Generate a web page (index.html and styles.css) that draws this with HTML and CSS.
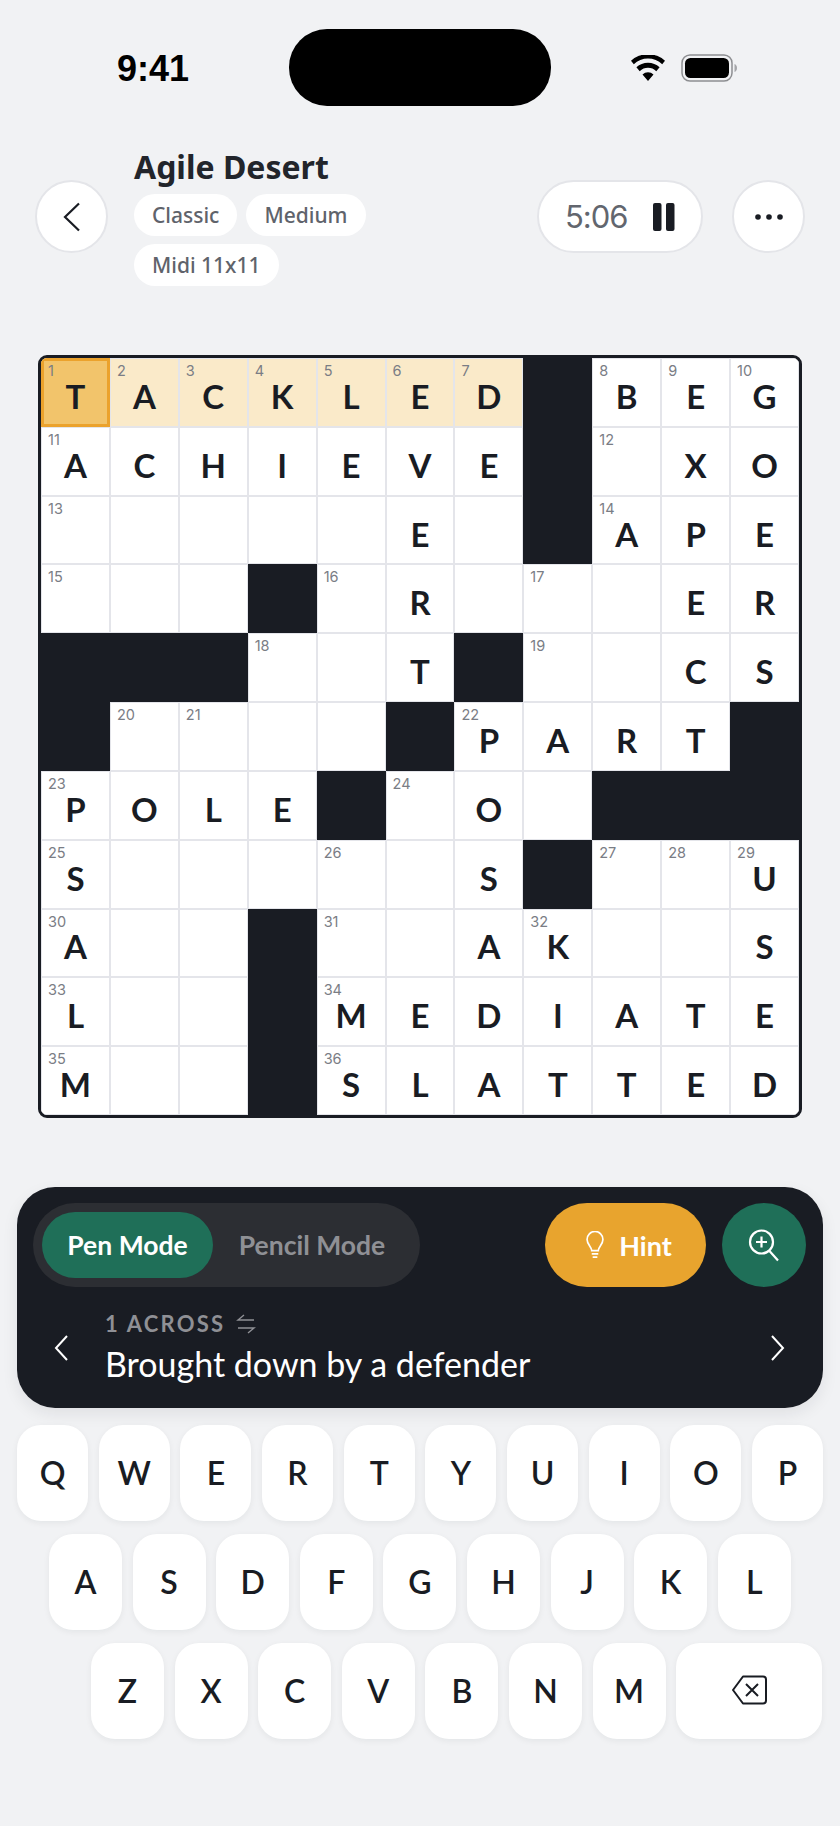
FILE: index.html
```html
<!DOCTYPE html>
<html lang="en">
<head>
<meta charset="UTF-8" />
<title>Agile Desert</title>
<link rel="stylesheet" href="styles.css">
</head>
<body>

<div class="status">
  <span class="time">9:41</span>
  <div class="island"></div>
  <div class="status-icons">
    <svg class="wifi" viewBox="0 0 34 26"><path d="M17 26l-5.500-6.600a8 8 0 0 1 11 0zM8.700 16.200L5.400 12.300a17 17 0 0 1 23.200 0l-3.300 3.900a12 12 0 0 0-16.600 0zM2.800 9.200L0 5.800a25 25 0 0 1 34 0l-2.800 3.400a20.500 20.500 0 0 0-28.400 0z" fill="#000"/></svg>
    <svg class="battery" viewBox="0 0 56 28"><rect x="1" y="1" width="50" height="26" rx="8" fill="none" stroke="#8d8e91" stroke-width="1.500"/><rect x="4" y="4" width="44" height="20" rx="5.500" fill="#000"/><path d="M53.500 10c1.500.5 2.500 2 2.500 4s-1 3.500-2.500 4z" fill="#a5a6a9"/></svg>
  </div>
</div>

<header class="top">
  <button class="round">
    <svg width="18" height="30" viewBox="0 0 18 30"><path d="M16 1.500L2 15l14 13.500" fill="none" stroke="#191c23" stroke-width="2.200"/></svg>
  </button>
  <div class="info">
    <h1>Agile Desert</h1>
    <div class="chips">
      <span class="chip">Classic</span>
      <span class="chip">Medium</span>
      <span class="chip">Midi 11x11</span>
    </div>
  </div>
  <div class="timer">
    <span>5:06</span>
    <svg width="22" height="30" viewBox="0 0 22 30"><rect x="0" y="1" width="8.500" height="28" rx="2" fill="#191c23"/><rect x="13" y="1" width="8.500" height="28" rx="2" fill="#191c23"/></svg>
  </div>
  <button class="round">
    <svg width="30" height="8" viewBox="0 0 30 8"><circle cx="4" cy="4" r="2.800" fill="#191c23"/><circle cx="15" cy="4" r="2.800" fill="#191c23"/><circle cx="26" cy="4" r="2.800" fill="#191c23"/></svg>
  </button>
</header>

<main class="grid">
  <div class="c act"><i>1</i>T</div><div class="c hl"><i>2</i>A</div><div class="c hl"><i>3</i>C</div><div class="c hl"><i>4</i>K</div><div class="c hl"><i>5</i>L</div><div class="c hl"><i>6</i>E</div><div class="c hl"><i>7</i>D</div><div class="b"></div><div class="c"><i>8</i>B</div><div class="c"><i>9</i>E</div><div class="c"><i>10</i>G</div>
  <div class="c"><i>11</i>A</div><div class="c">C</div><div class="c">H</div><div class="c">I</div><div class="c">E</div><div class="c">V</div><div class="c">E</div><div class="b"></div><div class="c"><i>12</i></div><div class="c">X</div><div class="c">O</div>
  <div class="c"><i>13</i></div><div class="c"></div><div class="c"></div><div class="c"></div><div class="c"></div><div class="c">E</div><div class="c"></div><div class="b"></div><div class="c"><i>14</i>A</div><div class="c">P</div><div class="c">E</div>
  <div class="c"><i>15</i></div><div class="c"></div><div class="c"></div><div class="b"></div><div class="c"><i>16</i></div><div class="c">R</div><div class="c"></div><div class="c"><i>17</i></div><div class="c"></div><div class="c">E</div><div class="c">R</div>
  <div class="b"></div><div class="b"></div><div class="b"></div><div class="c"><i>18</i></div><div class="c"></div><div class="c">T</div><div class="b"></div><div class="c"><i>19</i></div><div class="c"></div><div class="c">C</div><div class="c">S</div>
  <div class="b"></div><div class="c"><i>20</i></div><div class="c"><i>21</i></div><div class="c"></div><div class="c"></div><div class="b"></div><div class="c"><i>22</i>P</div><div class="c">A</div><div class="c">R</div><div class="c">T</div><div class="b"></div>
  <div class="c"><i>23</i>P</div><div class="c">O</div><div class="c">L</div><div class="c">E</div><div class="b"></div><div class="c"><i>24</i></div><div class="c">O</div><div class="c"></div><div class="b"></div><div class="b"></div><div class="b"></div>
  <div class="c"><i>25</i>S</div><div class="c"></div><div class="c"></div><div class="c"></div><div class="c"><i>26</i></div><div class="c"></div><div class="c">S</div><div class="b"></div><div class="c"><i>27</i></div><div class="c"><i>28</i></div><div class="c"><i>29</i>U</div>
  <div class="c"><i>30</i>A</div><div class="c"></div><div class="c"></div><div class="b"></div><div class="c"><i>31</i></div><div class="c"></div><div class="c">A</div><div class="c"><i>32</i>K</div><div class="c"></div><div class="c"></div><div class="c">S</div>
  <div class="c"><i>33</i>L</div><div class="c"></div><div class="c"></div><div class="b"></div><div class="c"><i>34</i>M</div><div class="c">E</div><div class="c">D</div><div class="c">I</div><div class="c">A</div><div class="c">T</div><div class="c">E</div>
  <div class="c"><i>35</i>M</div><div class="c"></div><div class="c"></div><div class="b"></div><div class="c"><i>36</i>S</div><div class="c">L</div><div class="c">A</div><div class="c">T</div><div class="c">T</div><div class="c">E</div><div class="c">D</div>
</main>

<section class="panel">
  <div class="tools">
    <div class="modes">
      <span class="mode active">Pen Mode</span>
      <span class="mode">Pencil Mode</span>
    </div>
    <button class="hint">
      <svg width="20" height="28" viewBox="0 0 20 30" fill="none" stroke="#fff" stroke-width="1.800"><path d="M6.500 21c0-4-5-6.500-5-12a8.500 8.500 0 0 1 17 0c0 5.500-5 8-5 12z"/><path d="M6.500 24.500h7M7.500 28h5"/></svg>
      Hint
    </button>
    <button class="zoom">
      <svg width="32" height="34" viewBox="0 0 32 34" fill="none" stroke="#fff" stroke-width="2.200"><circle cx="13.500" cy="14" r="11.500"/><path d="M21.500 23L30 32.500M13.500 8.500v11M8 14h11"/></svg>
    </button>
  </div>
  <div class="clue">
    <svg width="16" height="28" viewBox="0 0 16 28"><path d="M14 2L3 14l11 12" fill="none" stroke="#fff" stroke-width="2"/></svg>
    <div class="clue-text">
      <div class="clue-label">1 ACROSS
        <svg width="20" height="20" viewBox="0 0 20 20" fill="none" stroke="#8f9095" stroke-width="1.400"><path d="M18 6H2l6-5M2 14h16l-6 5"/></svg>
      </div>
      <div class="clue-body">Brought down by a defender</div>
    </div>
    <svg width="16" height="28" viewBox="0 0 16 28"><path d="M2 2l11 12L2 26" fill="none" stroke="#fff" stroke-width="2"/></svg>
  </div>
</section>

<section class="keyboard">
  <div class="row row1">
    <div class="key">Q</div><div class="key">W</div><div class="key">E</div><div class="key">R</div><div class="key">T</div><div class="key">Y</div><div class="key">U</div><div class="key">I</div><div class="key">O</div><div class="key">P</div>
  </div>
  <div class="row row2">
    <div class="key">A</div><div class="key">S</div><div class="key">D</div><div class="key">F</div><div class="key">G</div><div class="key">H</div><div class="key">J</div><div class="key">K</div><div class="key">L</div>
  </div>
  <div class="row row3">
    <div class="key">Z</div><div class="key">X</div><div class="key">C</div><div class="key">V</div><div class="key">B</div><div class="key">N</div><div class="key">M</div>
    <div class="key del">
      <svg width="36" height="30" viewBox="0 0 36 30" fill="none" stroke="#191c23" stroke-width="2"><path d="M12 1.500h20a3 3 0 0 1 3 3v21a3 3 0 0 1-3 3H12L2 15z" stroke-linejoin="round"/><path d="M15 9l12 12M27 9L15 21"/></svg>
    </div>
  </div>
</section>

</body>
</html>
```

FILE: styles.css
```css
* { box-sizing: border-box; }
body {
  margin: 0;
  width: 840px;
  height: 1826px;
  overflow: hidden;
  background: #f1f2f4;
  color: #191c23;
  font-family: "Lato", "Noto Sans", sans-serif;
}
button {
  border: none;
  padding: 0;
  font: inherit;
}

.status {
  display: flex;
  align-items: center;
  height: 77px;
  margin-top: 29px;
  padding-left: 117px;
}
.time {
  width: 172px;
  padding-top: 2px;
  font-family: "Liberation Sans", sans-serif;
  font-size: 36px;
  font-weight: 700;
  color: #000;
}
.island {
  width: 262px;
  height: 77px;
  background: #000;
  border-radius: 38px;
}
.status-icons {
  display: flex;
  align-items: center;
  gap: 16px;
  margin-left: 80px;
}
.wifi { width: 34px; height: 26px; }
.battery { width: 56px; height: 28px; }

.top {
  display: flex;
  align-items: center;
  height: 133px;
  margin-top: 44px;
  padding: 0 35px;
}
.round {
  flex: none;
  display: flex;
  align-items: center;
  justify-content: center;
  width: 73px;
  height: 73px;
  background: #fff;
  border: 2px solid #e4e5e9;
  border-radius: 50%;
}
.info {
  width: 430px;
  padding: 3px 0 0 26px;
}
h1 {
  margin: 0 0 11px;
  font-family: "Noto Sans", sans-serif;
  font-size: 32px;
  line-height: 32px;
  font-weight: 700;
  color: #22252b;
}
.chips {
  display: flex;
  flex-wrap: wrap;
  gap: 8px 9px;
  width: 250px;
}
.chip {
  height: 42px;
  padding: 0 18px;
  background: #fff;
  border-radius: 21px;
  font-family: "Noto Sans", sans-serif;
  font-size: 21px;
  line-height: 42px;
  font-weight: 500;
  color: #5f636b;
}
.timer {
  flex: none;
  display: flex;
  align-items: center;
  gap: 25px;
  width: 166px;
  height: 73px;
  margin-right: 29px;
  padding-left: 26px;
  background: #fff;
  border: 2px solid #e4e5e9;
  border-radius: 37px;
  font-family: "Inter", sans-serif;
  font-size: 31px;
  letter-spacing: -1px;
  color: #62666e;
}

.grid {
  display: grid;
  grid-template-columns: repeat(11, 1fr);
  grid-template-rows: repeat(11, 1fr);
  width: 764px;
  height: 763px;
  margin: 72px 0 0 38px;
  background: #fff;
  border: 3px solid #191c23;
  border-radius: 9px;
  overflow: hidden;
}
.c {
  position: relative;
  display: flex;
  align-items: center;
  justify-content: center;
  padding-top: 7px;
  border: 1px solid #e4e5ea;
  font-size: 33px;
  font-weight: 700;
}
.c i {
  position: absolute;
  top: 4px;
  left: 6px;
  font-family: "Inter", sans-serif;
  font-style: normal;
  font-size: 14.500px;
  line-height: 16px;
  font-weight: 400;
  color: #7a7d85;
}
.hl { background: #faeac9; }
.act {
  background: #f2c46b;
  border: 3px solid #eba22c;
}
.act i { top: 2px; left: 4px; }
.b { background: #191c23; }

.panel {
  width: 806px;
  height: 221px;
  margin: 69px 0 0 17px;
  padding: 16px 16px 0;
  background: #191c23;
  border-radius: 38px;
  box-shadow: 0 6px 16px rgba(25, 28, 35, 0.08);
}
.tools {
  display: flex;
  align-items: center;
}
.modes {
  display: flex;
  align-items: center;
  width: 387px;
  height: 84px;
  padding: 0 9px;
  background: #2c2e33;
  border-radius: 42px;
}
.mode {
  flex: 1;
  font-size: 26.500px;
  font-weight: 700;
  text-align: center;
  color: #8f9095;
}
.mode.active {
  flex: none;
  width: 171px;
  height: 66px;
  background: #1f6f58;
  border-radius: 33px;
  line-height: 66px;
  color: #fff;
}
.hint {
  display: flex;
  align-items: center;
  justify-content: center;
  gap: 14px;
  width: 161px;
  height: 84px;
  margin-left: 125px;
  padding-left: 6px;
  background: #e8a42e;
  border-radius: 42px;
  font-size: 27px;
  font-weight: 700;
  color: #fff;
}
.zoom {
  display: flex;
  align-items: center;
  justify-content: center;
  width: 84px;
  height: 84px;
  margin-left: 16px;
  background: #1f6f58;
  border-radius: 50%;
}
.clue {
  display: flex;
  align-items: center;
  margin-top: 24px;
  padding: 0 21px 0 20px;
}
.clue-text {
  flex: 1;
  padding-left: 36px;
}
.clue-label {
  display: flex;
  align-items: center;
  gap: 11px;
  font-size: 22px;
  line-height: 26px;
  font-weight: 700;
  letter-spacing: 2.200px;
  color: #8f9095;
}
.clue-body {
  margin-top: 6px;
  font-size: 34px;
  line-height: 42px;
  color: #fff;
}

.keyboard {
  display: flex;
  flex-direction: column;
  gap: 13px;
  margin-top: 17px;
}
.row {
  display: flex;
  gap: 10.600px;
  height: 96px;
}
.row1 { padding: 0 17px; }
.row1 .key { flex: 1; }
.row2 { padding-left: 49px; }
.row2 .key, .row3 .key { width: 73px; }
.row3 { padding-left: 91px; }
.key {
  display: flex;
  align-items: center;
  justify-content: center;
  padding-bottom: 2px;
  background: #fff;
  border-radius: 24px;
  box-shadow: 0 2px 6px rgba(25, 28, 35, 0.06);
  font-size: 32px;
  font-weight: 600;
}
.row3 .del { width: 146px; }
```
